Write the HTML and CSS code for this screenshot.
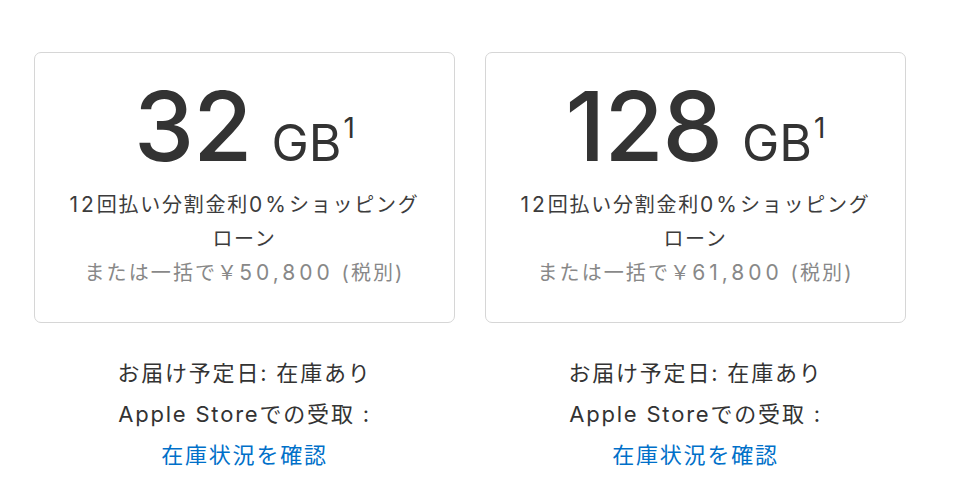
FILE: index.html
```html
<!DOCTYPE html>
<html lang="ja">
<head>
<meta charset="utf-8">
<title>iPad storage</title>
<link rel="stylesheet" href="styles.css">
</head>
<body>
<div class="options">
  <div class="option">
    <div class="card">
      <div class="capacity"><span class="num">32</span><span class="unit">GB<sup class="fn">1</sup></span></div>
      <p class="plan"><span class="lat">12</span>回払い分割金利<span class="lat">0%</span>ショッピング<br>ローン</p>
      <p class="price">または一括で￥<span class="amt">50,800</span> (税別)</p>
    </div>
    <div class="delivery">
      <p class="line">お届け予定日: 在庫あり</p>
      <p class="line">Apple Storeでの受取 :</p>
      <p class="line"><a class="link" href="#">在庫状況を確認</a></p>
    </div>
  </div>
  <div class="option">
    <div class="card">
      <div class="capacity"><span class="num">128</span><span class="unit">GB<sup class="fn">1</sup></span></div>
      <p class="plan"><span class="lat">12</span>回払い分割金利<span class="lat">0%</span>ショッピング<br>ローン</p>
      <p class="price">または一括で￥<span class="amt">61,800</span> (税別)</p>
    </div>
    <div class="delivery">
      <p class="line">お届け予定日: 在庫あり</p>
      <p class="line">Apple Storeでの受取 :</p>
      <p class="line"><a class="link" href="#">在庫状況を確認</a></p>
    </div>
  </div>
</div>
</body>
</html>
```
FILE: styles.css
```css
html, body {
  margin: 0;
  padding: 0;
  background: #fff;
}
body {
  font-family: Inter, "Noto Sans CJK JP", sans-serif;
  color: #333;
}
.options {
  display: grid;
  grid-template-columns: 421px 421px;
  column-gap: 30px;
  padding: 52px 0 0 34px;
}
.option {
  display: flex;
  flex-direction: column;
}
.card {
  box-sizing: border-box;
  height: 271px;
  border: 1px solid #d6d6d6;
  border-radius: 7px;
  text-align: center;
  padding-top: 25px;
}
.capacity {
  line-height: 96px;
  height: 96px;
  white-space: nowrap;
}
.num {
  font-size: 96px;
  font-weight: 500;
  letter-spacing: -1px;
}
.unit {
  font-size: 50px;
  margin-left: 20px;
}
.fn {
  font-size: 28px;
  line-height: 0;
  vertical-align: 23px;
  margin-left: 2px;
}
.plan {
  margin: 14px 0 0;
  font-size: 20px;
  line-height: 34px;
  letter-spacing: 1.75px;
  color: #3c3c3c;
}
.price {
  margin: 0;
  font-size: 20px;
  line-height: 34px;
  letter-spacing: 2.1px;
  color: #888;
}
.lat {
  font-size: 21px;
  letter-spacing: 3px;
}
.amt {
  font-size: 21px;
  letter-spacing: 4px;
}
.delivery {
  text-align: center;
  padding-top: 30px;
}
.line {
  margin: 0;
  font-size: 22px;
  line-height: 41px;
  letter-spacing: 1.8px;
  color: #333;
}
.link {
  color: #0070c9;
  text-decoration: none;
}
```
